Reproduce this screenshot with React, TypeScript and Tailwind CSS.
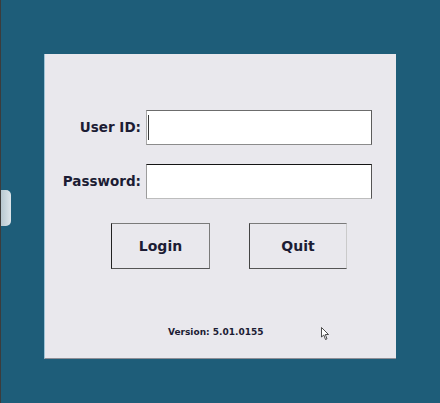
const font = { fontFamily: '"DejaVu Sans", Verdana, sans-serif' };

function Field({ label, dark, caret }: { label: string; dark?: boolean; caret?: boolean }) {
  return (
    <>
      <div className="flex items-center justify-end text-[13.5px] font-bold text-[#1c1c34]">{label}</div>
      <div
        className={
          "h-[35px] bg-white border " +
          (dark
            ? "border-t-[#141414] border-l-[#9c9c9c] border-r-[#555] border-b-[#bdbdbd]"
            : "border-t-[#6c6c6c] border-l-[#a8a8a8] border-r-[#5c5c5c] border-b-[#8c8c8c]")
        }
      >
        {caret && <div className="ml-[1px] mt-[4px] h-[25px] w-[1px] bg-[#3a3a3a]" />}
      </div>
    </>
  );
}

export default function App() {
  return (
    <div
      className="relative w-[440px] h-[403px] overflow-hidden bg-[#1e5d79] border-l border-l-[#3c3c3c] pt-[54px] pl-[43px]"
      style={font}
    >
      {/* side handle */}
      <div className="absolute left-0 top-[190px] h-[36px] w-[10px] rounded-r-[5px] bg-gradient-to-r from-[#b8c8d0] to-[#dde5ea]" />

      <div className="w-[352px] h-[305px] bg-[#e9e8ed] border-l border-l-[#9ec3d6] border-b border-b-[#8e8e96] flex flex-col">
        <div className="mt-[56px] grid grid-cols-[96px_226px] gap-x-[5px] gap-y-[19px]">
          <Field label="User ID:" caret />
          <Field label="Password:" dark />
        </div>

        <div className="mt-[24px] ml-[66px] flex gap-[39px]">
          <button className="w-[99px] h-[46px] bg-[#e9e8ed] border border-t-[#7a7a7a] border-l-[#222] border-r-[#7a7a7a] border-b-[#555] text-[14px] font-bold text-[#1c1c34]">
            Login
          </button>
          <button className="w-[98px] h-[46px] bg-[#e9e8ed] border border-t-[#7a7a7a] border-l-[#444] border-r-[#cacaca] border-b-[#555] text-[14px] font-bold text-[#1c1c34]">
            Quit
          </button>
        </div>

        <div className="mt-[57px] ml-[123px] text-[9px] font-bold text-[#1c1c34]">Version: 5.01.0155</div>
      </div>

      {/* mouse pointer */}
      <svg className="absolute left-[320px] top-[327px]" width="9" height="14" viewBox="0 0 9 14">
        <path d="M0.5 0.5 L0.5 10 L2.8 8 L4.5 12.5 L6 11.8 L4.3 7.5 L7.5 7.5 Z" fill="#fff" stroke="#222" strokeWidth="0.8" />
      </svg>
    </div>
  );
}
